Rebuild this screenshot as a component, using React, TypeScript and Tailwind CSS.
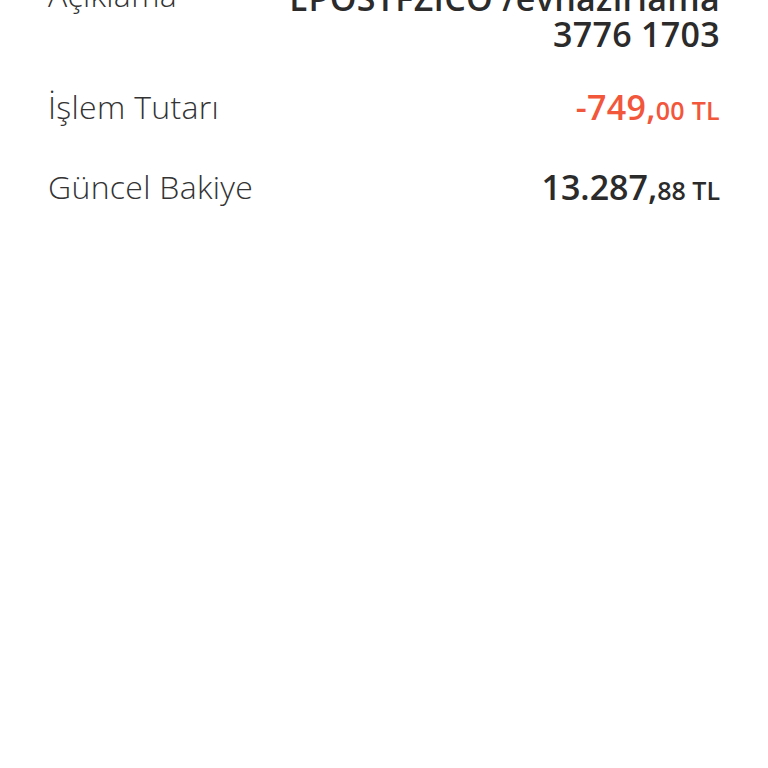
export default function App() {
  return (
    <div
      className="min-h-screen w-[768px] bg-white px-12 text-[#2b2b2b]"
      style={{ fontFamily: '"Open Sans", "Noto Sans", sans-serif' }}
    >
      <div className="mt-[-20px] flex flex-col">
        {/* Açıklama */}
        <div className="flex items-start justify-between">
          <span className="mt-[-3px] text-[32px] font-light leading-[36px] tracking-[0.3px] text-[#333]">Açıklama</span>
          <span className="text-right text-[34px] font-semibold leading-[36px] tracking-[0.3px]">
            EPOSTFZICO /evhazirlama
            <br />
            3776 1703
          </span>
        </div>

        {/* İşlem Tutarı */}
        <div className="mt-[37px] flex items-start justify-between">
          <span className="text-[32px] font-light leading-[36px] tracking-[0.3px] text-[#333]">İşlem Tutarı</span>
          <span className="text-[34px] font-semibold leading-[36px] tracking-[0.3px] text-[#f2563b]">
            -749,<span className="text-[25px]">00 TL</span>
          </span>
        </div>

        {/* Güncel Bakiye */}
        <div className="mt-[41px] flex items-start justify-between">
          <span className="text-[32px] font-light leading-[36px] tracking-[0.3px] text-[#333]">Güncel Bakiye</span>
          <span className="text-[34px] font-semibold leading-[36px]">
            13.287,<span className="text-[25px]">88 TL</span>
          </span>
        </div>
      </div>
    </div>
  );
}
